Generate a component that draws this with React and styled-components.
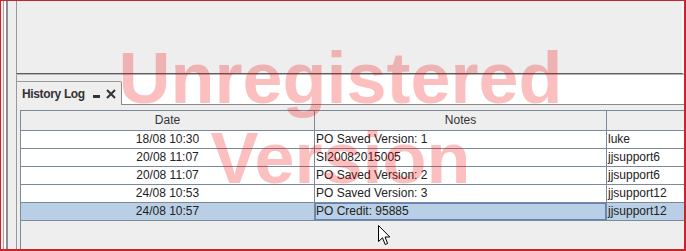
import styled, { createGlobalStyle } from "styled-components";

const GlobalStyle = createGlobalStyle`
  html, body {
    margin: 0;
    padding: 0;
    background: #ffffff;
  }
  body {
    font-family: "Liberation Sans", Arial, sans-serif;
  }
`;

const rows = [
  { date: "18/08 10:30", note: "PO Saved Version: 1", user: "luke" },
  { date: "20/08 11:07", note: "SI20082015005", user: "jjsupport6" },
  { date: "20/08 11:07", note: "PO Saved Version: 2", user: "jjsupport6" },
  { date: "24/08 10:53", note: "PO Saved Version: 3", user: "jjsupport12" },
  { date: "24/08 10:57", note: "PO Credit: 95885", user: "jjsupport12", selected: true },
];

export default function App() {
  return (
    <>
      <GlobalStyle />
      <Window>
        <Gutter />
        <Column>
          <TopPanel />
          <TabStrip>
            <TabSlot>
              <Tab>
                <TabTitle>History Log</TabTitle>
                <TabButton>
                  <svg width="8" height="10" viewBox="0 0 8 10">
                    <rect x="0" y="6" width="7" height="3" fill="#333" />
                  </svg>
                </TabButton>
                <TabButton>
                  <svg width="10" height="10" viewBox="0 0 10 10">
                    <path d="M1 1 L9 9 M9 1 L1 9" stroke="#333" strokeWidth="2" />
                  </svg>
                </TabButton>
              </Tab>
            </TabSlot>
            <TabFiller />
          </TabStrip>
          <TablePanel>
            <ScrollPane>
              <Table>
                <HeadCell>Date</HeadCell>
                <HeadCell>Notes</HeadCell>
                <HeadCell $last />
                {rows.map((r, i) => (
                  <Row key={i}>
                    <Cell $align="center" $selected={r.selected}>{r.date}</Cell>
                    <Cell $selected={r.selected} $focus={r.selected}>{r.note}</Cell>
                    <Cell $selected={r.selected} $last>{r.user}</Cell>
                  </Row>
                ))}
              </Table>
            </ScrollPane>
          </TablePanel>
        </Column>
        <Watermark>
          Unregistered
          <br />
          Version
        </Watermark>
        <Pointer>
          <svg width="13" height="21" viewBox="0 0 13 21">
            <path
              d="M0.5 0.5 L0.5 16.5 L4.5 12.8 L7.2 19.5 L9.6 18.5 L7 12 L11.8 12 Z"
              fill="#ffffff"
              stroke="#000000"
              strokeWidth="1"
              strokeLinejoin="miter"
            />
          </svg>
        </Pointer>
      </Window>
    </>
  );
}

const Window = styled.div`
  position: relative;
  width: 686px;
  height: 251px;
  box-sizing: border-box;
  border-top: 1px solid #c8242c;
  border-left: 1px solid #c8242c;
  border-right: 2px solid #c8242c;
  border-bottom: 2px solid #c8242c;
  display: flex;
  overflow: hidden;
  background: #eeeeee;
`;

const Gutter = styled.div`
  width: 15px;
  flex-shrink: 0;
  background: linear-gradient(
    to right,
    #f3e6e6 0 2px,
    #a4a4a4 2px 3px,
    #fbfbfb 3px 5px,
    #8e8e8e 5px 7px,
    #eeeeee 7px 15px
  );
`;

const Column = styled.div`
  flex: 1;
  display: flex;
  flex-direction: column;
  min-width: 0;
`;

const TopPanel = styled.div`
  height: 72px;
  flex-shrink: 0;
  background: #eeeeee;
  border-left: 1px solid #999999;
  border-right: 2px solid #f8f8f8;
  border-bottom: 1px solid #5e5e5e;
  box-shadow: 0 1px 0 #b4b4b4;
`;

const TabStrip = styled.div`
  height: 30px;
  flex-shrink: 0;
  display: flex;
  margin-top: 1px;
`;

const TabSlot = styled.div`
  width: 106px;
  flex-shrink: 0;
  box-sizing: border-box;
  border-left: 1px solid #999999;
  background: #eeeeee;
  padding-top: 6px;
  display: flex;
  flex-direction: column;
`;

const Tab = styled.div`
  flex: 1;
  display: flex;
  align-items: center;
  padding-left: 5px;
  border-top: 1px solid #9a9a9a;
  border-right: 1px solid #8a8a8a;
  border-top-right-radius: 2px;
  background: #eeeeee;
  white-space: nowrap;
`;

const TabTitle = styled.span`
  font-size: 12px;
  font-weight: bold;
  letter-spacing: -0.35px;
  color: #333333;
  margin-right: 8px;
  margin-top: 1px;
  white-space: nowrap;
  flex-shrink: 0;
`;

const TabButton = styled.span`
  display: flex;
  align-items: center;
  margin-right: 5px;
  flex-shrink: 0;
`;

const TabFiller = styled.div`
  flex: 1;
  background: #ffffff;
  border-bottom: 1px solid #8a8a8a;
`;

const TablePanel = styled.div`
  flex: 1;
  display: flex;
  flex-direction: column;
  background: #eeeeee;
  border-left: 1px solid #999999;
  padding: 5px 0 0 3px;
`;

const ScrollPane = styled.div`
  flex: 1;
  border-top: 1px solid #7a8a99;
  border-left: 1px solid #7a8a99;
  background: #eeeeee;
`;

const Table = styled.div`
  display: grid;
  grid-template-columns: 294px 292px 1fr;
  font-size: 12px;
  color: #222222;
`;

const HeadCell = styled.div`
  height: 19px;
  line-height: 19px;
  text-align: center;
  background: #eeeeee;
  color: #333333;
  border-bottom: 1px solid #7a8a99;
  border-right: ${(p) => (p.$last ? "none" : "1px solid #7a8a99")};
`;

const Row = styled.div`
  display: contents;
`;

const Cell = styled.div`
  height: 17px;
  line-height: 17px;
  padding: 0 1px;
  white-space: nowrap;
  overflow: hidden;
  text-align: ${(p) => p.$align || "left"};
  background: ${(p) => (p.$selected ? "#b8cfe5" : "#ffffff")};
  border-bottom: 1px solid #7a8a99;
  border-right: ${(p) => (p.$last ? "none" : "1px solid #7a8a99")};
  box-shadow: ${(p) => (p.$focus ? "inset 0 0 0 1px #6382bf" : "none")};
`;

const Watermark = styled.div`
  position: absolute;
  left: 0;
  right: 0;
  top: 37px;
  text-align: center;
  font-family: "Liberation Sans", Arial, sans-serif;
  font-weight: bold;
  font-size: 72px;
  line-height: 80px;
  color: rgba(240, 0, 0, 0.25);
  pointer-events: none;
  padding-right: 4px;
`;

const Pointer = styled.div`
  position: absolute;
  left: 377px;
  top: 224px;
  line-height: 0;
  pointer-events: none;
`;
